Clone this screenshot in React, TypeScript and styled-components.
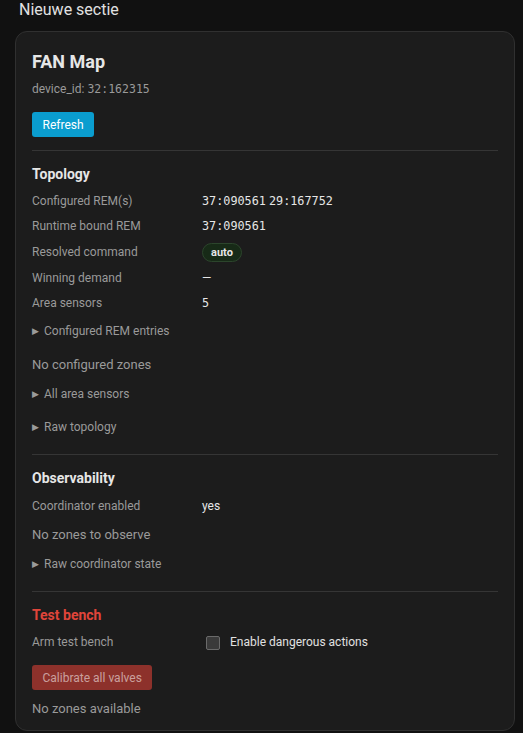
import React from 'react'
import styled, { createGlobalStyle } from 'styled-components'

const GlobalStyle = createGlobalStyle`
  html, body {
    margin: 0;
    padding: 0;
    background: #111111;
    font-family: Roboto, "Noto Sans", "Liberation Sans", sans-serif;
    color: #e1e1e1;
  }
`

const Page = styled.div`
  padding: 0 8px 0 15px;
`

const SectionTitle = styled.div`
  font-size: 16px;
  line-height: 20px;
  padding-left: 4px;
  color: #e1e1e1;
  height: 31px;
`

const Card = styled.div`
  background: #1c1c1c;
  border: 1px solid #303030;
  border-radius: 12px;
  padding: 16px 16px 12px;
  height: 670px;
  overflow: hidden;
`

const Title = styled.div`
  font-size: 18px;
  font-weight: 700;
  line-height: 28px;
  color: #e6e6e6;
`

const DeviceId = styled.div`
  margin-top: 5px;
  font-size: 12px;
  line-height: 16px;
  color: #9a9a9a;

  code {
    font-family: "DejaVu Sans Mono", "Liberation Mono", monospace;
    font-size: 11.5px;
  }
`

const Button = styled.button<{ $danger?: boolean; $mt?: number }>`
  display: block;
  margin-top: ${(p) => p.$mt ?? 15}px;
  height: 25px;
  padding: 0 10.5px;
  border: none;
  border-radius: 3px;
  font-family: inherit;
  font-size: 12px;
  background: ${(p) => (p.$danger ? '#8d312b' : '#0a9dcf')};
  color: ${(p) => (p.$danger ? 'rgba(255,255,255,0.55)' : '#ffffff')};
`

const Divider = styled.hr<{ $mt: number }>`
  border: none;
  border-top: 1px solid #353535;
  margin: ${(p) => p.$mt}px 0 0;
`

const Heading = styled.div<{ $danger?: boolean }>`
  margin-top: 13px;
  font-size: 14px;
  font-weight: 700;
  line-height: 20px;
  color: ${(p) => (p.$danger ? '#e0453a' : '#e6e6e6')};
`

const Grid = styled.div<{ $mt: number }>`
  margin-top: ${(p) => p.$mt}px;
  display: grid;
  grid-template-columns: 170px 1fr;
  row-gap: 8px;
  align-items: center;
`

const Label = styled.div`
  font-size: 12px;
  line-height: 17px;
  color: #9a9a9a;
`

const Value = styled.div`
  font-size: 12px;
  line-height: 17px;
  color: #e6e6e6;
  display: flex;
  align-items: center;
  gap: 3px;
`

const Code = styled.span`
  font-family: "DejaVu Sans Mono", "Liberation Mono", monospace;
  font-size: 11.8px;
`

const Pill = styled.span`
  display: inline-flex;
  align-items: center;
  box-sizing: border-box;
  height: 19px;
  padding: 0 8px;
  border-radius: 10px;
  background: #172a17;
  border: 1px solid #2c452c;
  font-size: 11px;
  font-weight: 700;
  color: #e6e6e6;
`

const Details = styled.details<{ $mt: number }>`
  margin-top: ${(p) => p.$mt}px;

  summary {
    list-style: none;
    font-size: 12px;
    line-height: 16px;
    color: #9a9a9a;
    cursor: pointer;
    display: flex;
    align-items: center;
  }

  summary::-webkit-details-marker {
    display: none;
  }

  summary::before {
    content: '▶';
    font-size: 9px;
    width: 12px;
    color: #9a9a9a;
  }
`

const Note = styled.div<{ $mt: number }>`
  margin-top: ${(p) => p.$mt}px;
  font-size: 13px;
  line-height: 18px;
  color: #9a9a9a;
`

const CheckRow = styled.label`
  display: flex;
  align-items: center;
  gap: 10px;
  font-size: 12px;
  line-height: 17px;
  color: #e1e1e1;
  margin-left: 4px;
`

const Box = styled.span`
  width: 12px;
  height: 12px;
  border: 1px solid #6a6a6a;
  border-radius: 2px;
  background: #3a3a3a;
`

export default function App() {
  return (
    <>
      <GlobalStyle />
      <Page>
        <SectionTitle>Nieuwe sectie</SectionTitle>
        <Card>
          <Title>FAN Map</Title>
          <DeviceId>
            device_id: <code>32:162315</code>
          </DeviceId>
          <Button>Refresh</Button>

          <Divider $mt={13} />
          <Heading>Topology</Heading>
          <Grid $mt={9}>
            <Label>Configured REM(s)</Label>
            <Value>
              <Code>37:090561</Code>
              <Code>29:167752</Code>
            </Value>
            <Label>Runtime bound REM</Label>
            <Value>
              <Code>37:090561</Code>
            </Value>
            <Label>Resolved command</Label>
            <Value>
              <Pill>auto</Pill>
            </Value>
            <Label>Winning demand</Label>
            <Value>—</Value>
            <Label>Area sensors</Label>
            <Value>
              <Code>5</Code>
            </Value>
          </Grid>
          <Details $mt={11}>
            <summary>Configured REM entries</summary>
          </Details>
          <Note $mt={17}>No configured zones</Note>
          <Details $mt={12}>
            <summary>All area sensors</summary>
          </Details>
          <Details $mt={17}>
            <summary>Raw topology</summary>
          </Details>

          <Divider $mt={19} />
          <Heading>Observability</Heading>
          <Grid $mt={10}>
            <Label>Coordinator enabled</Label>
            <Value>yes</Value>
          </Grid>
          <Note $mt={11}>No zones to observe</Note>
          <Details $mt={12}>
            <summary>Raw coordinator state</summary>
          </Details>

          <Divider $mt={19} />
          <Heading $danger>Test bench</Heading>
          <Grid $mt={9}>
            <Label>Arm test bench</Label>
            <CheckRow>
              <Box />
              Enable dangerous actions
            </CheckRow>
          </Grid>
          <Button $danger $mt={14}>
            Calibrate all valves
          </Button>
          <Note $mt={10}>No zones available</Note>
        </Card>
      </Page>
    </>
  )
}
